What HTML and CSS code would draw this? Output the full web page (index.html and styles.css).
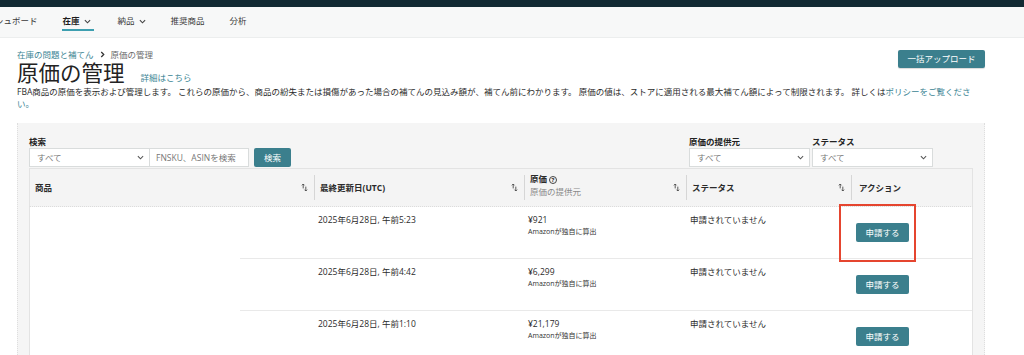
FILE: index.html
```html
<!DOCTYPE html>
<html lang="ja">
<head>
<meta charset="utf-8">
<title>原価の管理</title>
<link rel="stylesheet" href="styles.css">
</head>
<body>
<div class="topbar"></div>
<nav class="nav">
  <a class="nav-item first">ダッシュボード</a>
  <a class="nav-item active">在庫<svg class="chev" viewBox="0 0 8 5"><path d="M1 1l3 3 3-3"/></svg></a>
  <a class="nav-item">納品<svg class="chev" viewBox="0 0 8 5"><path d="M1 1l3 3 3-3"/></svg></a>
  <a class="nav-item">推奨商品</a>
  <a class="nav-item">分析</a>
</nav>

<main class="page">
  <div class="page-head">
    <div class="head-left">
      <div class="crumbs">
        <a class="crumb-link">在庫の問題と補てん</a>
        <svg class="crumb-sep" viewBox="0 0 6 8"><path d="M1.5 1l3 3-3 3"/></svg>
        <span class="crumb-current">原価の管理</span>
      </div>
      <div class="title-row">
        <h1 class="title">原価の管理</h1>
        <a class="help-link">詳細はこちら</a>
      </div>
    </div>
    <button class="btn btn-bulk">一括アップロード</button>
  </div>
  <p class="desc">FBA商品の原価を表示および管理します。 これらの原価から、商品の紛失または損傷があった場合の補てんの見込み額が、補てん前にわかります。 原価の値は、ストアに適用される最大補てん額によって制限されます。 詳しくは<a class="link">ポリシーをご覧ください。</a></p>

  <section class="panel">
    <div class="filters">
      <div class="filter-group">
        <label class="flabel">検索</label>
        <div class="search-row">
          <div class="select w-search">すべて<svg class="sel-chev" viewBox="0 0 8 5"><path d="M1 1l3 3 3-3"/></svg></div>
          <div class="input">FNSKU、ASINを検索</div>
          <button class="btn btn-search">検索</button>
        </div>
      </div>
      <div class="filter-right">
        <div class="filter-group">
          <label class="flabel">原価の提供元</label>
          <div class="select w-filter">すべて<svg class="sel-chev" viewBox="0 0 8 5"><path d="M1 1l3 3 3-3"/></svg></div>
        </div>
        <div class="filter-group">
          <label class="flabel">ステータス</label>
          <div class="select w-filter">すべて<svg class="sel-chev" viewBox="0 0 8 5"><path d="M1 1l3 3 3-3"/></svg></div>
        </div>
      </div>
    </div>

    <div class="table">
      <div class="thead">
        <div class="th c-product"><span>商品</span><svg class="sort" viewBox="0 0 8 10"><path d="M2.5 6V1M1 2.5l1.5-1.5L4 2.5M5.5 4v5M4 7.5l1.5 1.5L7 7.5"/></svg></div>
        <div class="th sepl"><span>最終更新日(UTC)</span><svg class="sort" viewBox="0 0 8 10"><path d="M2.5 6V1M1 2.5l1.5-1.5L4 2.5M5.5 4v5M4 7.5l1.5 1.5L7 7.5"/></svg></div>
        <div class="th sepl"><div class="th-stack"><span>原価<span class="qmark">?</span></span><span class="th-sub">原価の提供元</span></div><svg class="sort" viewBox="0 0 8 10"><path d="M2.5 6V1M1 2.5l1.5-1.5L4 2.5M5.5 4v5M4 7.5l1.5 1.5L7 7.5"/></svg></div>
        <div class="th sepl"><span>ステータス</span><svg class="sort" viewBox="0 0 8 10"><path d="M2.5 6V1M1 2.5l1.5-1.5L4 2.5M5.5 4v5M4 7.5l1.5 1.5L7 7.5"/></svg></div>
        <div class="th sepl th-action"><span>アクション</span></div>
      </div>
      <div class="tbody">
        <div class="product-cell"></div>
        <div class="rows">
          <div class="row">
            <div class="cell"></div>
            <div class="cell">2025年6月28日, 午前5:23</div>
            <div class="cell"><div>¥921</div><div class="sub">Amazonが独自に算出</div></div>
            <div class="cell">申請されていません</div>
            <div class="cell action"><button class="btn btn-apply">申請する</button><div class="highlight"></div></div>
          </div>
          <div class="row">
            <div class="cell"></div>
            <div class="cell">2025年6月28日, 午前4:42</div>
            <div class="cell"><div>¥6,299</div><div class="sub">Amazonが独自に算出</div></div>
            <div class="cell">申請されていません</div>
            <div class="cell action"><button class="btn btn-apply">申請する</button></div>
          </div>
          <div class="row">
            <div class="cell"></div>
            <div class="cell">2025年6月28日, 午前1:10</div>
            <div class="cell"><div>¥21,179</div><div class="sub">Amazonが独自に算出</div></div>
            <div class="cell">申請されていません</div>
            <div class="cell action"><button class="btn btn-apply">申請する</button></div>
          </div>
        </div>
      </div>
    </div>
  </section>
</main>
</body>
</html>
```

FILE: styles.css
```css
* { box-sizing: border-box; }
html, body { margin: 0; padding: 0; }
body {
  font-family: "Open Sans", "Noto Sans CJK JP", sans-serif;
  font-size: 8.5px;
  line-height: 12px;
  color: #2b2b2b;
  background: #fff;
  width: 1024px;
  height: 355px;
  overflow: hidden;
}
a { text-decoration: none; cursor: pointer; }
button { font-family: inherit; }

.topbar { height: 7px; background: #122a33; }

.nav {
  height: 31px;
  background: #f7f8f8;
  border-bottom: 1px solid #eceeee;
  display: flex;
  align-items: flex-start;
  gap: 23px;
  white-space: nowrap;
}
.nav-item {
  display: flex;
  align-items: center;
  gap: 4px;
  margin-top: 8px;
  padding: 0 1px 2px;
  line-height: 12px;
  font-size: 8.5px;
  color: #3a3a3a;
  border-bottom: 2px solid transparent;
}
.nav-item.first { margin-left: -23px; }
.nav-item.active { color: #1d1d1d; font-weight: 700; border-bottom-color: #3d9fb0; padding-right: 3px; }
.chev { width: 7px; height: 5px; fill: none; stroke: #444; stroke-width: 1.3; }

.page { padding: 0 39px 0 17px; }
.page-head { display: flex; justify-content: space-between; align-items: flex-start; }
.crumbs { display: flex; align-items: center; gap: 6px; margin-top: 11px; line-height: 11px; font-size: 8.5px; }
.crumb-link { color: #3c8594; }
.crumb-sep { width: 5px; height: 7px; fill: none; stroke: #333; stroke-width: 1.5; }
.crumb-current { color: #6b6b6b; }
.title-row { display: flex; align-items: baseline; gap: 16px; }
.title { margin: 0; font-size: 21.5px; line-height: 26px; font-weight: 400; color: #232323; }
.help-link { color: #3c8594; font-size: 8.5px; }

.btn {
  border: none;
  border-radius: 2px;
  background: #3b7f8d;
  color: #fff;
  font-size: 8.5px;
  line-height: 12px;
  padding: 0;
  cursor: pointer;
}
.btn-bulk { width: 87px; height: 18px; margin-top: 12px; box-shadow: 0 1px 1px rgba(0,0,0,0.15); }

.desc { margin: 0; font-size: 8.5px; line-height: 12px; color: #2b2b2b; }
.link { color: #3c8594; }

.panel {
  margin-top: 13px;
  height: 240px;
  background: #f5f5f5;
  border-left: 1px dotted #dedede;
  border-right: 1px dotted #dedede;
  padding: 13px 12px 0 11px;
}

.filters { display: flex; justify-content: space-between; margin-right: 39px; margin-bottom: 1px; }
.filter-right { display: flex; gap: 2px; }
.filter-group { display: flex; flex-direction: column; }
.flabel { font-weight: 700; line-height: 11px; margin-bottom: 1px; color: #222; }
.search-row { display: flex; align-items: center; }
.select {
  height: 19px;
  background: #fff;
  border: 1px solid #d9dcdc;
  color: #777;
  display: flex;
  align-items: center;
  justify-content: space-between;
  padding: 0 5px 0 7px;
}
.w-search { width: 121px; }
.w-filter { width: 121px; }
.sel-chev { width: 7px; height: 5px; fill: none; stroke: #555; stroke-width: 1.2; }
.input {
  width: 99px;
  height: 19px;
  background: #fff;
  border: 1px solid #d9dcdc;
  border-left: none;
  color: #777;
  padding: 0 6px;
  display: flex;
  align-items: center;
  white-space: nowrap;
}
.btn-search { width: 37px; height: 19px; margin-left: 5px; }

.table { width: 944px; }
.thead {
  display: grid;
  grid-template-columns: 284px 210px 162px 165px 123px;
  align-items: center;
  height: 39px;
  background: #f4f4f4;
  border: 1px solid #e3e3e3;
  border-bottom: 1px dotted #dcdcdc;
}
.th {
  height: 25px;
  display: flex;
  align-items: center;
  justify-content: space-between;
  padding: 0 6px 0 5px;
  font-weight: 700;
  color: #2a2a2a;
}
.sepl { border-left: 1px solid #d6d6d6; }
.c-product { padding-left: 5px; }
.th-action { padding-left: 7px; }
.sort { width: 7px; height: 9px; fill: none; stroke: #444; stroke-width: 1; }
.th-stack { display: flex; flex-direction: column; margin-top: -6px; line-height: 13px; }
.th-sub { font-weight: 400; color: #8a8a8a; }
.qmark {
  display: inline-flex;
  align-items: center;
  justify-content: center;
  width: 8px;
  height: 8px;
  margin-left: 2px;
  border: 1px solid #444;
  border-radius: 50%;
  font-size: 6px;
  line-height: 6px;
  font-weight: 700;
  vertical-align: 0;
}

.tbody { display: flex; background: #fff; border-left: 1px solid #e3e3e3; border-right: 1px solid #e3e3e3; }
.product-cell { width: 210px; flex: none; }
.rows { flex: 1; }
.row {
  display: grid;
  grid-template-columns: 73px 210px 162px 165px 122px;
  height: 51px;
}
.row + .row { border-top: 1px solid #e9e9e9; height: 52px; }
.cell { padding: 7px 5px 0; color: #2b2b2b; line-height: 12px; }
.sub { font-size: 7px; line-height: 11px; color: #333; }
.action { position: relative; padding: 16px 6px 0; }
.btn-apply { width: 53px; height: 19px; }
.highlight {
  position: absolute;
  left: -11px;
  top: -3px;
  width: 77px;
  height: 58px;
  border: 2px solid #e5452f;
}
```
